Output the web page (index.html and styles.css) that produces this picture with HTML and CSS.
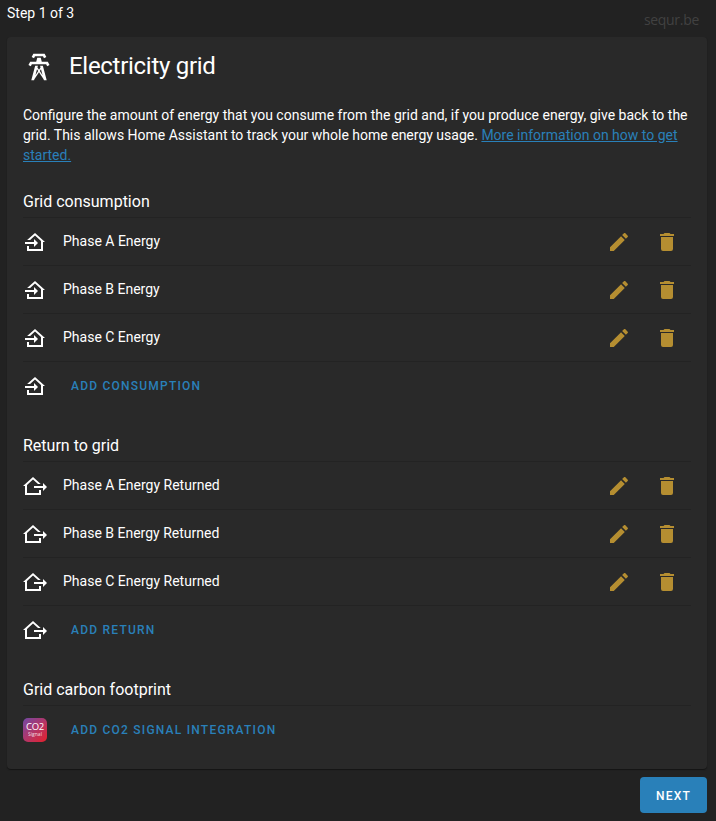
FILE: index.html
```html
<!DOCTYPE html>
<html lang="en">
<head>
<meta charset="utf-8">
<title>Electricity grid</title>
<link rel="stylesheet" href="styles.css">
</head>
<body>
<svg class="sprite" aria-hidden="true">
  <symbol id="tower" viewBox="0 0 24 24"><path d="M8.28,5.45L6.5,4.55L7.76,2H16.23L17.5,4.55L15.72,5.44L15,4H9L8.28,5.45M18.62,8H14.09L13.3,5H10.7L9.91,8H5.38L4.1,10.55L5.89,11.44L6.62,10H17.38L18.1,11.45L19.89,10.56L18.62,8M17.77,22H15.7L15.46,21.1L12,15.9L8.53,21.1L8.3,22H6.23L9.12,11H11.19L10.83,12.35L12,14.1L13.16,12.35L12.81,11H14.88L17.77,22M11.4,15L10.5,13.65L9.32,18.13L11.4,15M14.68,18.12L13.5,13.64L12.6,15L14.68,18.12Z"/></symbol>
  <symbol id="import" viewBox="0 0 24 24"><path d="M15 13L11 17V14H2V12H11V9L15 13M4 21V16H6V19H18V11L12 5.6L7.1 10H4.1L12 2.9L22 12H20V21H4Z"/></symbol>
  <symbol id="export" viewBox="0 0 24 24"><path d="M24 13L20 17V14H11V12H20V9L24 13M2 21V12H0L10 3L17.5 9.7V10H15L10 5.6L4 11V19H16V16H18V21H2Z"/></symbol>
  <symbol id="pencil" viewBox="0 0 24 24"><path d="M20.71,7.04C21.1,6.65 21.1,6 20.71,5.63L18.37,3.29C18,2.9 17.35,2.9 16.96,3.29L15.12,5.12L18.87,8.87M3,17.25V21H6.75L17.81,9.93L14.06,6.18L3,17.25Z"/></symbol>
  <symbol id="delete" viewBox="0 0 24 24"><path d="M19,4H15.5L14.5,3H9.5L8.5,4H5V6H19M6,19A2,2 0 0,0 8,21H16A2,2 0 0,0 18,19V7H6V19Z"/></symbol>
</svg>
<header class="top">
  <span>Step 1 of 3</span>
  <span class="site">sequr.be</span>
</header>
<main class="card">
  <h1 class="title"><svg class="tower"><use href="#tower"/></svg>Electricity grid</h1>
  <p class="intro">Configure the amount of energy that you consume from the grid and, if you produce energy, give back to the grid. This allows Home Assistant to track your whole home energy usage. <a href="#">More information on how to get started.</a></p>

  <section class="group">
    <h2>Grid consumption</h2>
    <div class="row"><svg><use href="#import"/></svg><span class="name">Phase A Energy</span><button class="tool"><svg><use href="#pencil"/></svg></button><button class="tool"><svg><use href="#delete"/></svg></button></div>
    <div class="row"><svg><use href="#import"/></svg><span class="name">Phase B Energy</span><button class="tool"><svg><use href="#pencil"/></svg></button><button class="tool"><svg><use href="#delete"/></svg></button></div>
    <div class="row"><svg><use href="#import"/></svg><span class="name">Phase C Energy</span><button class="tool"><svg><use href="#pencil"/></svg></button><button class="tool"><svg><use href="#delete"/></svg></button></div>
    <div class="row"><svg><use href="#import"/></svg><button class="add">Add consumption</button></div>
  </section>

  <section class="group">
    <h2>Return to grid</h2>
    <div class="row"><svg><use href="#export"/></svg><span class="name">Phase A Energy Returned</span><button class="tool"><svg><use href="#pencil"/></svg></button><button class="tool"><svg><use href="#delete"/></svg></button></div>
    <div class="row"><svg><use href="#export"/></svg><span class="name">Phase B Energy Returned</span><button class="tool"><svg><use href="#pencil"/></svg></button><button class="tool"><svg><use href="#delete"/></svg></button></div>
    <div class="row"><svg><use href="#export"/></svg><span class="name">Phase C Energy Returned</span><button class="tool"><svg><use href="#pencil"/></svg></button><button class="tool"><svg><use href="#delete"/></svg></button></div>
    <div class="row"><svg><use href="#export"/></svg><button class="add">Add return</button></div>
  </section>

  <section class="group">
    <h2>Grid carbon footprint</h2>
    <div class="row"><span class="co2"><span class="co2-main">CO2</span><span class="co2-sub">Signal</span></span><button class="add">Add CO2 signal integration</button></div>
  </section>
</main>
<footer class="actions"><button class="next">Next</button></footer>
</body>
</html>
```

FILE: styles.css
```css
* { box-sizing: border-box; }

body {
  margin: 0;
  padding: 0 9px 0 7px;
  height: 821px;
  overflow: hidden;
  background: #222;
  color: #fff;
  font: 14px/20px Roboto, sans-serif;
}

.sprite { position: absolute; width: 0; height: 0; }

svg { display: block; flex: none; width: 24px; height: 24px; fill: currentColor; }

button {
  margin: 0;
  padding: 0;
  border: 0;
  background: none;
  font: inherit;
}

.top {
  display: flex;
  justify-content: space-between;
  height: 37px;
  padding: 3px 8px 0 0;
}

.site {
  padding-top: 7px;
  color: #414141;
  font: 14px/20px "Open Sans", sans-serif;
  letter-spacing: -0.3px;
}

.card {
  height: 732px;
  padding: 0 16px;
  border-radius: 4px;
  background: #292929;
  box-shadow: 0 1px 1px #151515;
}

.title {
  display: flex;
  align-items: center;
  gap: 14px;
  margin: 0;
  padding-top: 12px;
  font-size: 24px;
  font-weight: 400;
  line-height: 34px;
  letter-spacing: -0.288px;
}

.title .tower { width: 32px; height: 32px; margin-top: 2px; }

.intro { margin: 22px 0 0; }

.intro a { color: #2980b9; }

.group h2 {
  margin: 0;
  padding-top: 25px;
  height: 52px;
  font-size: 16px;
  font-weight: 400;
  line-height: 24px;
}

.row {
  display: flex;
  align-items: center;
  height: 48px;
  padding-top: 1px;
  border-top: 1px solid #232323;
}

.name { flex: 1; margin-left: 16px; padding-bottom: 2px; }

.tool {
  display: flex;
  align-items: center;
  justify-content: center;
  width: 48px;
  height: 46px;
  color: #b58e31;
}

.add,
.next {
  font-size: 12px;
  font-weight: 500;
  letter-spacing: 1.22px;
  text-transform: uppercase;
}

.add { height: 20px; margin-left: 24px; padding-bottom: 1px; color: #2980b9; }

.co2 {
  display: flex;
  flex-direction: column;
  align-items: center;
  width: 24px;
  height: 24px;
  padding-top: 4px;
  border-radius: 5px;
  background: linear-gradient(135deg, #7049a5, #b23669 50%, #e5202b);
  font-family: "Open Sans", sans-serif;
}

.co2-main { font-size: 9.5px; line-height: 10px; letter-spacing: -0.3px; }

.co2-sub { font-size: 5px; line-height: 4px; opacity: 0.8; }

.actions { display: flex; justify-content: flex-end; padding-top: 8px; }

.next {
  width: 67px;
  height: 36px;
  padding-top: 1px;
  border-radius: 4px;
  background: #2980b9;
  color: #fff;
}
```
